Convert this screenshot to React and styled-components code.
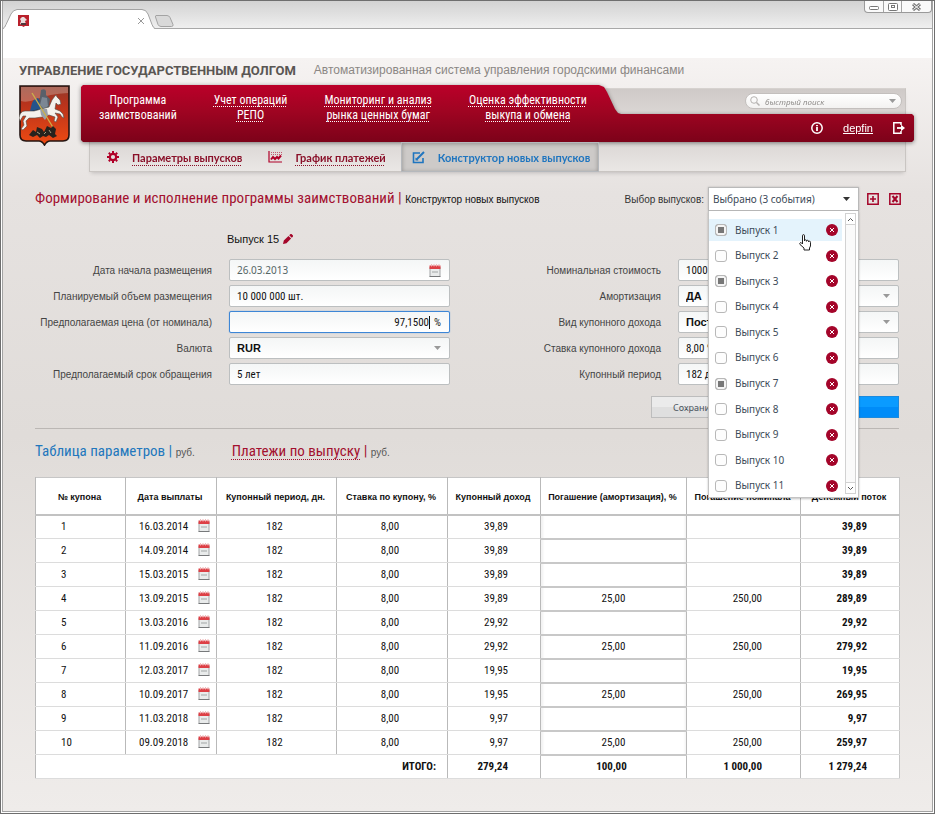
import React, { useState } from 'react';
import styled, { createGlobalStyle } from 'styled-components';

const narrow = `'Roboto Condensed', 'Liberation Sans', Arial, sans-serif`;
const arial = `'Liberation Sans', Arial, sans-serif`;
const humanist = `'Noto Sans', 'Open Sans', sans-serif`;

const GlobalStyle = createGlobalStyle`
  * {
    box-sizing: border-box;
  }

  body {
    background: #fff;
    color: #222;
    font-family: ${arial};
    font-size: 10px;
    line-height: 15px;
    margin: 0;
  }

  button,
  input,
  select {
    color: inherit;
    font: inherit;
    margin: 0;
  }

  button {
    background: none;
    border: 0;
    cursor: pointer;
    padding: 0;
  }

  svg {
    display: block;
    flex: none;
  }
`;

const Frame = styled.div`
  background: #fff;
  border: 1px solid #6e6e6e;
  display: flex;
  min-height: 100vh;
  padding: 0 1px 1px;
`;

const Window = styled.div`
  border: 1px solid #a3a3a3;
  border-top: 0;
  display: flex;
  flex: 1;
  flex-direction: column;
  min-width: 860px;
`;

const TabStrip = styled.div`
  align-items: flex-end;
  background: linear-gradient(#d2d2d2, #efefef);
  border-bottom: 1px solid #a8a8a8;
  display: flex;
  height: 28px;
`;

const Tab = styled.div`
  display: grid;
  height: 20px;
  margin-bottom: -1px;
  width: 152px;

  > * {
    grid-area: 1 / 1;
  }
`;

const TabContent = styled.div`
  align-items: center;
  display: flex;
  justify-content: space-between;
  padding: 3px 11px 0 15px;
`;

const NewTab = styled.button`
  align-self: flex-end;
  margin-bottom: 1px;
`;

const WindowButtons = styled.div`
  align-self: flex-start;
  background: #fafafa;
  border: 1px solid #9a9a9a;
  border-radius: 0 0 4px 4px;
  border-top: 0;
  display: flex;
  height: 12px;
  margin-left: auto;
`;

const WindowButton = styled.button`
  display: flex;
  align-items: center;
  justify-content: center;
  width: ${(props) => (props.$wide ? 30 : 18)}px;

  & + & {
    border-left: 1px solid #a5a5a5;
  }
`;

const AddressArea = styled.div`
  background: #fff;
  height: 29px;
`;

const Page = styled.div`
  background: linear-gradient(#f6f3f2, #e6e2e0 18%, #e0dcd9 50%, #efecea);
  flex: 1;
  padding: 0 18px 32px 16px;
`;

const TitleRow = styled.div`
  align-items: center;
  display: flex;
  gap: 18px;
  height: 24px;
  margin-bottom: 3px;
`;

const SystemName = styled.h1`
  color: #5a5653;
  font-family: Roboto, sans-serif;
  font-size: 13px;
  font-weight: 700;
  margin: 0;
`;

const SystemNote = styled.p`
  color: #8b8784;
  font-size: 12px;
  margin: 0;
`;

const Header = styled.header`
  align-items: flex-start;
  display: flex;
  gap: 11px;
`;

const HeaderMain = styled.div`
  display: grid;
  flex: 1;
  grid-template-rows: 57px 31px;
`;

const GreyPanel = styled.div`
  background: linear-gradient(#cfcac8, #dcd8d6 28px, #dcd8d6 55px, #eae7e5);
  border: 1px solid #c9c5c2;
  border-top-color: #d6d2cf;
  box-shadow: 0 3px 4px -2px rgba(0, 0, 0, 0.18);
  grid-area: 1 / 1 / 3 / 2;
  margin: 3px 8px 1px;
`;

const BarShadow = styled.div`
  display: grid;
  filter: drop-shadow(0 1px 2px rgba(0, 0, 0, 0.45));
  grid-area: 1 / 1;
`;

const RedBar = styled.div`
  background: linear-gradient(#bb0029, #a00422 45%, #7c0219);
  clip-path: polygon(
    0 2px, 2px 0, 518px 0, 523px 2px, 526px 7px, 534px 24px, 537px 28px, 540px 29px,
    calc(100% - 2px) 29px, 100% 31px, 100% calc(100% - 2px), calc(100% - 2px) 100%,
    2px 100%, 0 calc(100% - 2px)
  );
  display: flex;
  justify-content: space-between;
`;

const MainNav = styled.nav`
  display: flex;
  gap: 37px;
  padding: 8px 0 0 18px;
`;

const MainLink = styled.a`
  color: #fff;
  font-family: ${narrow};
  font-size: 12px;
  line-height: 15px;
  text-align: center;
  text-decoration: ${(props) => (props.$current ? 'none' : 'underline dotted 1px')};
  text-decoration-skip-ink: none;
  text-underline-offset: 2px;
  white-space: pre-line;
`;

const UserBar = styled.div`
  align-items: center;
  align-self: flex-end;
  color: #fff;
  display: flex;
  gap: 20px;
  height: 28px;
  padding-right: 9px;
`;

const UserLink = styled.a`
  color: #fff;
  font-size: 11px;
`;

const Search = styled.form`
  align-items: center;
  align-self: start;
  background: linear-gradient(#fff, #f3f2f1);
  border: 1px solid #c3bfbd;
  border-radius: 9px;
  display: flex;
  gap: 5px;
  grid-area: 1 / 1;
  height: 16px;
  justify-self: end;
  margin: 8px 12px 0 0;
  padding: 0 5px 0 4px;
  position: relative;
  width: 157px;

  input {
    background: none;
    border: 0;
    flex: 1;
    font-family: ${humanist};
    font-size: 8px;
    font-style: italic;
    height: 14px;
    min-width: 0;
    outline: 0;
    padding: 0;
  }

  input::placeholder {
    color: #8f8c8a;
    opacity: 1;
  }
`;

const SubNav = styled.nav`
  display: flex;
  grid-area: 2 / 1;
  margin: 0 8px 1px 9px;
  position: relative;
`;

const SubItem = styled.div`
  align-items: center;
  background: ${(props) => (props.$current ? '#cdcac8' : 'none')};
  border: 1px solid ${(props) => (props.$current ? '#b5b8bc' : 'transparent')};
  box-shadow: ${(props) => (props.$current ? 'inset 0 1px 4px rgba(0, 0, 0, 0.3)' : 'none')};
  color: ${(props) => (props.$current ? '#1f75bf' : '#b00028')};
  display: flex;
  gap: 13px;
  padding: 0 ${(props) => (props.$current ? 8 : 14)}px;
  padding-left: ${(props) => (props.$first ? 16 : 10)}px;
`;

const SubLink = styled.a`
  color: ${(props) => (props.$current ? '#1f75bf' : '#8a1029')};
  font-family: Lato, ${humanist};
  font-size: 11px;
  font-weight: 700;
  text-decoration: ${(props) => (props.$current ? 'none' : 'underline dotted 1px')};
  text-decoration-skip-ink: none;
  text-underline-offset: 3px;
`;

const Content = styled.main`
  padding: 0 15px 0 16px;
`;

const HeadingRow = styled.div`
  align-items: center;
  display: flex;
  height: 24px;
  justify-content: space-between;
  margin-top: 14px;
`;

const Heading = styled.h2`
  color: #a3102f;
  font-family: ${narrow};
  font-size: 15px;
  font-weight: 400;
  line-height: 20px;
  margin: 0;

  small {
    color: #111;
    font-family: ${arial};
    font-size: 10px;
  }
`;

const Picker = styled.div`
  align-items: center;
  display: flex;
  gap: 4px;
`;

const PickerLabel = styled.span`
  color: #333;
`;

const PickerBox = styled.div`
  position: relative;
  width: 151px;
`;

const PickerButton = styled.button`
  align-items: center;
  background: #fff;
  border: 1px solid #b9b9b9;
  box-shadow: 0 0 2px rgba(0, 0, 0, 0.2);
  color: #3c4a58;
  display: flex;
  font-family: ${humanist};
  font-size: 10px;
  height: 24px;
  justify-content: space-between;
  padding: 0 8px 0 4px;
  width: 100%;
`;

const PickerPanel = styled.div`
  background: #fff;
  border: 1px solid #c4c4c4;
  border-top: 0;
  box-shadow: 0 1px 2px rgba(0, 0, 0, 0.25);
  display: flex;
  gap: 3px;
  height: 287px;
  left: 0;
  padding-right: 2px;
  position: absolute;
  right: 0;
  top: 24px;
  z-index: 2;
`;

const OptionList = styled.ul`
  display: flex;
  flex: 1;
  flex-direction: column;
  justify-content: space-between;
  list-style: none;
  margin: 0;
  padding: 8px 0 0;
`;

const Option = styled.li`
  align-items: center;
  background: ${(props) => (props.$hover ? '#e4f3fc' : 'none')};
  display: flex;
  height: 22px;
  justify-content: space-between;
  padding: 0 4px 0 6px;
  position: relative;

  label {
    align-items: center;
    color: #3c4a58;
    display: flex;
    font-family: ${humanist};
    font-size: 10px;
    gap: 8px;
  }
`;

const Checkbox = styled.input.attrs({ type: 'checkbox' })`
  appearance: none;
  background: #fdfdfd;
  border: 1px solid #b8b8b8;
  border-radius: 3px;
  height: 12px;
  width: 12px;

  &:checked {
    background: #777;
    box-shadow: inset 0 0 0 2px #f4f4f4;
  }
`;

const HandCursor = styled.svg`
  left: 90px;
  position: absolute;
  top: 15px;
  z-index: 1;
`;

const ScrollTrack = styled.div`
  background: #fafafa;
  border: 1px solid #d2d2d2;
  display: flex;
  flex-direction: column;
  justify-content: space-between;
  margin: 2px 0 3px;
  width: 11px;

  button {
    align-items: center;
    background: #fff;
    display: flex;
    height: 11px;
    justify-content: center;
  }

  button:first-child {
    border-bottom: 1px solid #d2d2d2;
  }

  button:last-child {
    border-top: 1px solid #d2d2d2;
  }
`;

const PickerTools = styled.div`
  display: flex;
  gap: 10px;
  margin: 0 -2px 0 4px;
`;

const IssueTitle = styled.div`
  align-items: center;
  color: #111;
  display: flex;
  font-size: 11px;
  gap: 4px;
  height: 16px;
  margin: 20px 0 0 192px;
`;

const Form = styled.form`
  column-gap: 17px;
  display: grid;
  grid-template-columns: 177fr 221fr 194fr 221fr;
  margin-top: 12px;
  row-gap: 4px;
`;

const Label = styled.label`
  align-self: center;
  color: #444;
  text-align: right;
`;

const Field = styled.div`
  align-items: center;
  background: linear-gradient(#f4f6f6, #fff);
  border: 1px solid ${(props) => (props.$active ? '#3d86d6' : '#bcbfc0')};
  border-radius: 2px;
  box-shadow: ${(props) => (props.$active ? '0 0 1px #3d86d6' : 'none')};
  display: flex;
  font-family: ${narrow};
  font-size: 11px;
  height: 22px;
  min-width: 0;
  padding: 0 8px 0 7px;

  input,
  select {
    appearance: none;
    background: none;
    border: 0;
    color: ${(props) => (props.$muted ? '#566' : '#111')};
    flex: 1;
    font-family: ${(props) => (props.$muted ? humanist : props.$strong ? arial : narrow)};
    font-size: ${(props) => (props.$muted ? 10 : 11)}px;
    font-weight: ${(props) => (props.$strong ? 700 : 400)};
    min-width: 0;
    outline: 0;
    padding: 0;
    text-align: ${(props) => (props.$active ? 'right' : 'left')};
  }
`;

const Caret = styled.span`
  background: #111;
  height: 13px;
  margin-right: 4px;
  width: 1px;
`;

const Actions = styled.div`
  display: flex;
  gap: 10px;
  justify-content: flex-end;
  margin-top: 11px;
`;

const ActionButton = styled.button`
  background: ${(props) =>
    props.$primary
      ? 'linear-gradient(#0a9bff 50%, #008cf8 50%)'
      : 'linear-gradient(#ebebeb 50%, #dfdfdf 50%)'};
  border: 1px solid ${(props) => (props.$primary ? '#1b8ade' : '#bdbdbd')};
  color: #4c5661;
  font-family: ${humanist};
  font-size: 9px;
  height: 22px;
  padding-left: 21px;
  text-align: left;
  width: 119px;
`;

const Divider = styled.hr`
  border: 0;
  border-top: 1px solid #bbb7b4;
  margin: 10px 0 11px;
`;

const Tabs = styled.div`
  color: #a3102f;
  display: flex;
  font-family: ${narrow};
  font-size: 15px;
  gap: 37px;
  line-height: 22px;

  span:first-child {
    color: #2277bd;
  }

  a {
    color: inherit;
    text-decoration: underline dotted 1px;
    text-decoration-skip-ink: none;
    text-underline-offset: 3px;
  }

  small {
    color: #555;
    font-family: ${arial};
    font-size: 10px;
  }
`;

const Table = styled.table`
  background: #fff;
  border: 1px solid #c6c6c6;
  border-collapse: collapse;
  color: #111;
  font-family: ${narrow};
  font-size: 11px;
  margin-top: 13px;
  table-layout: fixed;
  width: 100%;

  th,
  td {
    border-bottom: 1px solid #dcdcdc;
    border-left: 1px solid #b9b9b9;
    height: 24px;
    padding: 0 4px 0 0;
    text-align: center;
  }

  thead th {
    border-bottom: 2px solid #c2c2c2;
    font-family: ${arial};
    font-size: 9px;
    height: 37px;
    padding: 4px 2px 0 0;
  }

  tfoot td {
    font-weight: 700;
  }
`;

const NumberCell = styled.td`
  && {
    padding-right: ${(props) => props.$pad}px;
    text-align: right;
  }
  font-weight: ${(props) => (props.$bold ? 700 : 400)};
`;

const IndexCell = styled.td`
  && {
    padding-left: 25px;
    text-align: left;
  }
`;

const EditCell = styled.td`
  && {
    border-bottom: 2px solid #c8c8c8;
    padding: 0;
  }
  background: linear-gradient(90deg, #f0f0f0, #fff 3px, #fff calc(100% - 3px), #f0f0f0);
`;

const DateWrap = styled.div`
  align-items: center;
  display: flex;
  justify-content: space-between;
  padding: 0 2px 0 13px;

  svg {
    margin-bottom: 3px;
  }
`;

const Emblem = () => (
  <svg width="51" height="61" viewBox="0 0 51 61" role="img" aria-label="Герб Москвы">
    <defs>
      <linearGradient id="shield" x1="0" y1="0" x2="0" y2="1">
        <stop offset="0" stopColor="#8e3a2c" />
        <stop offset="0.3" stopColor="#b8331c" />
        <stop offset="1" stopColor="#ee4a12" />
      </linearGradient>
    </defs>
    <path d="M1 1h49v49q0 6-6 6H31q-3 0-5.500 4q-2.500-4-5.500-4H7q-6 0-6-6z" fill="url(#shield)" stroke="#241512" strokeWidth="1.600" />
    <path d="M2 2h47v6Q30 9 18 14Q8 18 2 16z" fill="#d8b3a8" opacity="0.4" />
    <path d="M19 13q-6 1-7 9l-1 4 9 1 4-8z" fill="#24548c" />
    <path d="M12 26l8-2-1 4z" fill="#153459" />
    <path d="M22 5q4-2 5 1v4l4 4-1 8-2 7-6-2-2-7 1-8z" fill="#59606a" />
    <path d="M23 12l5 1 1 8-4 3-4-4z" fill="#7c8794" />
    <path
      d="M30 22l3-7 3-4 1-1 1 2 3 3 1 4-3 1-2-2-1 6 5 2 3 3 1 4-2-1-2-3-5-1 3 4-2 5-2-1 1-4-6-2-7 2-7 1-6 0-3 3 1 5-4 4-2-1 3-4-1-4 3-5-3 0-3 5-1-3q1-7 6-7l5 0 4 0z"
      fill="#f4f1ec"
      stroke="#514b47"
      strokeWidth="0.600"
    />
    <path d="M21 24l7 0 1 6-3 5-4-5z" fill="#9aa0a8" />
    <path d="M13 8l22 36" stroke="#cbb24a" strokeWidth="1.300" />
    <path d="M10 50l4-5 3 2 1-5 5 2 2 3 3-6 4 2 2-2 3 3-1 5 2 2-4 2-4-3-3 2-3-1-3 2-3-3-4 2z" fill="#26221d" />
    <path d="M18 47l3 2M30 45l2 3M25 49l2-2" stroke="#c8bd96" strokeWidth="0.800" />
  </svg>
);

const MiniEmblem = () => (
  <svg width="11" height="12" viewBox="0 0 11 12" aria-hidden="true">
    <path d="M0 0h11v11H7l-1.500 1L4 11H0z" fill="#b9202c" />
    <path d="M4 2h2l2 2 1 1-2 1 1 3-3 1-3-1 1-3-1-2z" fill="#e9dcdc" />
    <path d="M3 8h5v2H3z" fill="#51383c" />
  </svg>
);

const Calendar = () => (
  <svg width="12" height="13" viewBox="0 0 12 13" aria-hidden="true">
    <path d="M1 3h10v9.500H1z" fill="#e9ebeb" stroke="#a2a4a6" />
    <path d="M.5 12.500h11" stroke="#77797b" />
    <path d="M.5 1.500h11v3.500H.5z" fill="#dd3f45" />
    <path d="M2.500 0v2.500M5 0v2.500M7.500 0v2.500M10 0v2.500" stroke="#efb9ba" />
    <path d="M3 8h6" stroke="#b9bcbc" strokeWidth="1.500" />
  </svg>
);

const Arrow = ({ color = '#999' }) => (
  <svg width="7" height="4" viewBox="0 0 7 4" aria-hidden="true">
    <path d="M0 0h7L3.500 4z" fill={color} />
  </svg>
);

const Gear = () => (
  <svg width="12" height="12" viewBox="0 0 12 12" fill="none" stroke="currentColor" aria-hidden="true">
    <circle cx="6" cy="6" r="3.200" strokeWidth="2.200" />
    <path d="M6 0v2M6 10v2M0 6h2M10 6h2M1.800 1.800l1.400 1.400M8.800 8.800l1.400 1.400M10.200 1.800L8.800 3.200M3.200 8.800l-1.400 1.400" strokeWidth="2" />
  </svg>
);

const ChartIcon = () => (
  <svg width="14" height="12" viewBox="0 0 14 12" fill="none" stroke="currentColor" aria-hidden="true">
    <path d="M1 0v11h13" strokeWidth="1.200" />
    <path d="M3 1.500h11M3 3.500h11" strokeDasharray="1 1" opacity="0.6" />
    <path d="M3 8.500L5 6l2 2 2-2 1.500 1.500L13 4.500" strokeWidth="2" />
  </svg>
);

const EditIcon = () => (
  <svg width="13" height="13" viewBox="0 0 13 13" fill="none" stroke="currentColor" aria-hidden="true">
    <path d="M8 2H1.500v9.500H11V7" strokeWidth="1.600" />
    <path d="M4.500 8.500L12 1" strokeWidth="2" />
    <path d="M3.500 6.500v3h3z" fill="currentColor" stroke="none" />
  </svg>
);

const Pencil = () => (
  <svg width="10" height="10" viewBox="0 0 10 10" fill="#a5062a" aria-hidden="true">
    <path d="M0 10l.8-3.500L5.500 2l2.600 2.500-4.600 4.700zM6.200 1.300L7.500 0q.6-.2 1 0L10 1.500q.2.500 0 1L8.800 3.800z" />
  </svg>
);

const Cross = () => (
  <svg width="12" height="12" viewBox="0 0 12 12" aria-hidden="true">
    <circle cx="6" cy="6" r="6" fill="#a4052a" />
    <path d="M4 4l4 4M8 4L4 8" stroke="#fff" />
  </svg>
);

const mainLinks = [
  'Программа\nзаимствований',
  'Учет операций\nРЕПО',
  'Мониторинг и анализ\nрынка ценных бумаг',
  'Оценка эффективности\nвыкупа и обмена',
];

const columns = [
  ['№ купона', 90],
  ['Дата выплаты', 91],
  ['Купонный период, дн.', 120],
  ['Ставка по купону, %', 111],
  ['Купонный доход', 93],
  ['Погашение (амортизация), %', 146],
  ['Погашение номинала', 114],
  ['Денежный поток', 99],
];

const rows = [
  ['16.03.2014', '39,89', '', '', '39,89'],
  ['14.09.2014', '39,89', '', '', '39,89'],
  ['15.03.2015', '39,89', '', '', '39,89'],
  ['13.09.2015', '39,89', '25,00', '250,00', '289,89'],
  ['13.03.2016', '29,92', '', '', '29,92'],
  ['11.09.2016', '29,92', '25,00', '250,00', '279,92'],
  ['12.03.2017', '19,95', '', '', '19,95'],
  ['10.09.2017', '19,95', '25,00', '250,00', '269,95'],
  ['11.03.2018', '9,97', '', '', '9,97'],
  ['09.09.2018', '9,97', '25,00', '250,00', '259,97'],
];

const issues = Array.from({ length: 11 }, (_, i) => i + 1);

const IssuePicker = () => {
  const [selected, setSelected] = useState([1, 3, 7]);
  const toggle = (n) =>
    setSelected(selected.includes(n) ? selected.filter((x) => x !== n) : [...selected, n]);

  return (
    <Picker>
      <PickerLabel>Выбор выпусков:</PickerLabel>
      <PickerBox>
        <PickerButton type="button" aria-haspopup="true" aria-expanded="true">
          Выбрано ({selected.length} события)
          <Arrow color="#333" />
        </PickerButton>
        <PickerPanel>
          <OptionList>
            {issues.map((n) => (
              <Option key={n} $hover={n === 1}>
                <label>
                  <Checkbox checked={selected.includes(n)} onChange={() => toggle(n)} />
                  Выпуск {n}
                </label>
                <button type="button" aria-label={`Удалить выпуск ${n}`}>
                  <Cross />
                </button>
                {n === 1 && (
                  <HandCursor width="13" height="17" viewBox="0 0 13 17" aria-hidden="true">
                    <path
                      d="M3.500 10V1.800q0-1.200 1-1.200t1 1.200V7q0-1.200 1-1.200t1 1v.5q0-1 1-1t1 1v.7q0-.8 1-.8t1 1.200V12l-1 2v2H5v-2L1 10.500Q.3 9 1.500 8.500q1 0 2 1.500z"
                      fill="#fff"
                      stroke="#222"
                    />
                  </HandCursor>
                )}
              </Option>
            ))}
          </OptionList>
          <ScrollTrack>
            <button type="button" aria-label="Вверх">
              <svg width="5" height="3" viewBox="0 0 5 3" fill="none" stroke="#555">
                <path d="M0 3l2.500-2.500L5 3" />
              </svg>
            </button>
            <button type="button" aria-label="Вниз">
              <svg width="5" height="3" viewBox="0 0 5 3" fill="none" stroke="#555">
                <path d="M0 0l2.500 2.500L5 0" />
              </svg>
            </button>
          </ScrollTrack>
        </PickerPanel>
      </PickerBox>
      <PickerTools>
        <button type="button" aria-label="Добавить">
          <svg width="12" height="12" viewBox="0 0 12 12" fill="none" stroke="#a5062a">
            <path d="M.8.800h10.400v10.400H.8z" strokeWidth="1.500" />
            <path d="M6 3v6M3 6h6" strokeWidth="1.600" />
          </svg>
        </button>
        <button type="button" aria-label="Экспорт в Excel">
          <svg width="12" height="12" viewBox="0 0 12 12" fill="none" stroke="#a5062a">
            <path d="M.8.800h10.400v10.400H.8z" strokeWidth="1.500" />
            <path d="M3.500 3l5 6M8.500 3l-5 6" strokeWidth="2" />
          </svg>
        </button>
      </PickerTools>
    </Picker>
  );
};

const TextField = ({ id, label, value, children, ...look }) => (
  <>
    <Label htmlFor={id}>{label}</Label>
    <Field {...look}>
      <input id={id} defaultValue={value} />
      {children}
    </Field>
  </>
);

const SelectField = ({ id, label, value }) => (
  <>
    <Label htmlFor={id}>{label}</Label>
    <Field $strong>
      <select id={id}>
        <option>{value}</option>
      </select>
      <Arrow />
    </Field>
  </>
);

const App = () => {
  return (
    <Frame>
      <GlobalStyle />
      <Window>
        <TabStrip>
          <Tab>
            <svg width="152" height="20" viewBox="0 0 152 20" aria-hidden="true">
              <path d="M0 20q2-1 3-4l5-11q2-4 6-4h125q4 0 6 4l4 11q1 3 3 4z" fill="#fff" />
              <path d="M0 19.500q2-1 3-4l5-10.500q2-4 6-4.500h125q4 0 6 4.500l4 10.500q1 3 3 4" fill="none" stroke="#a3a3a3" />
            </svg>
            <TabContent>
              <MiniEmblem />
              <button type="button" aria-label="Закрыть вкладку">
                <svg width="6" height="6" viewBox="0 0 6 6" stroke="#999">
                  <path d="M0 0l6 6M6 0L0 6" />
                </svg>
              </button>
            </TabContent>
          </Tab>
          <NewTab type="button" aria-label="Новая вкладка">
            <svg width="19" height="12" viewBox="0 0 19 12" fill="#d9d9d9" stroke="#a3a3a3">
              <path d="M1 .5h11q2 0 3 2l3 7q.5 2-1.500 2H6q-2 0-3-2L.5 2Q.2.700 1 .5z" />
            </svg>
          </NewTab>
          <WindowButtons>
            <WindowButton type="button" aria-label="Свернуть">
              <svg width="10" height="9" viewBox="0 0 10 9" fill="#fff" stroke="#777">
                <rect x=".5" y="4.500" width="9" height="3" rx="1" />
              </svg>
            </WindowButton>
            <WindowButton type="button" aria-label="Развернуть">
              <svg width="10" height="8" viewBox="0 0 10 8" fill="#fff" stroke="#777">
                <rect x=".5" y=".5" width="9" height="7" rx="1" />
                <rect x="3.500" y="2.500" width="3" height="2" />
              </svg>
            </WindowButton>
            <WindowButton type="button" aria-label="Закрыть" $wide>
              <svg width="9" height="8" viewBox="0 0 9 8">
                <path d="M1 1l7 6M8 1L1 7" stroke="#777" strokeWidth="3" />
                <path d="M1.500 1.500l6 5M7.500 1.500l-6 5" stroke="#fff" />
              </svg>
            </WindowButton>
          </WindowButtons>
        </TabStrip>
        <AddressArea />
        <Page>
          <TitleRow>
            <SystemName>УПРАВЛЕНИЕ ГОСУДАРСТВЕННЫМ ДОЛГОМ</SystemName>
            <SystemNote>Автоматизированная система управления городскими финансами</SystemNote>
          </TitleRow>
          <Header>
            <Emblem />
            <HeaderMain>
              <GreyPanel />
              <BarShadow>
                <RedBar>
                  <MainNav>
                    {mainLinks.map((text, i) => (
                      <MainLink key={text} href="#" $current={i === 0}>
                        {text}
                      </MainLink>
                    ))}
                  </MainNav>
                  <UserBar>
                    <svg width="12" height="12" viewBox="0 0 12 12" fill="none" stroke="#fff" aria-hidden="true">
                      <circle cx="6" cy="6" r="5.200" strokeWidth="1.500" />
                      <path d="M6 5v4M6 3v1.300" strokeWidth="1.800" />
                    </svg>
                    <UserLink href="#">depfin</UserLink>
                    <svg width="12" height="12" viewBox="0 0 12 12" fill="none" stroke="#fff" aria-hidden="true">
                      <path d="M8 3V.8H.8v10.400H8V9" strokeWidth="1.500" />
                      <path d="M4 6h5" strokeWidth="1.800" />
                      <path d="M8 2.800L12 6 8 9.200z" fill="#fff" stroke="none" />
                    </svg>
                  </UserBar>
                </RedBar>
              </BarShadow>
              <Search>
                <svg width="10" height="10" viewBox="0 0 10 10" fill="none" stroke="#b5b2b0" aria-hidden="true">
                  <circle cx="4" cy="4" r="3.300" />
                  <path d="M6.500 6.500l3 3" strokeWidth="1.500" />
                </svg>
                <input aria-label="Поиск" placeholder="быстрый поиск" />
                <Arrow />
              </Search>
              <SubNav>
                <SubItem $first>
                  <Gear />
                  <SubLink href="#">Параметры выпусков</SubLink>
                </SubItem>
                <SubItem>
                  <ChartIcon />
                  <SubLink href="#">График платежей</SubLink>
                </SubItem>
                <SubItem $current>
                  <EditIcon />
                  <SubLink href="#" $current>
                    Конструктор новых выпусков
                  </SubLink>
                </SubItem>
              </SubNav>
            </HeaderMain>
          </Header>
          <Content>
            <HeadingRow>
              <Heading>
                Формирование и исполнение программы заимствований |{' '}
                <small>Конструктор новых выпусков</small>
              </Heading>
              <IssuePicker />
            </HeadingRow>
            <IssueTitle>
              Выпуск 15 <Pencil />
            </IssueTitle>
            <Form>
              <TextField id="start" label="Дата начала размещения" value="26.03.2013" $muted>
                <Calendar />
              </TextField>
              <TextField id="nominal" label="Номинальная стоимость" value="1000.00" />
              <TextField id="volume" label="Планируемый объем размещения" value="10 000 000 шт." />
              <SelectField id="amort" label="Амортизация" value="ДА" />
              <TextField id="price" label="Предполагаемая цена (от номинала)" value="97,1500" $active>
                <Caret />%
              </TextField>
              <SelectField id="kind" label="Вид купонного дохода" value="Постоянный" />
              <SelectField id="currency" label="Валюта" value="RUR" />
              <TextField id="rate" label="Ставка купонного дохода" value="8,00 %" />
              <TextField id="term" label="Предполагаемый срок обращения" value="5 лет" />
              <TextField id="period" label="Купонный период" value="182 дн." />
            </Form>
            <Actions>
              <ActionButton type="button">Сохранить</ActionButton>
              <ActionButton type="button" aria-label="Рассчитать" $primary />
            </Actions>
            <Divider />
            <Tabs>
              <span>
                Таблица параметров | <small>руб.</small>
              </span>
              <span>
                <a href="#">Платежи по выпуску</a> | <small>руб.</small>
              </span>
            </Tabs>
            <Table>
              <colgroup>
                {columns.map(([name, width]) => (
                  <col key={name} width={width} />
                ))}
              </colgroup>
              <thead>
                <tr>
                  {columns.map(([name]) => (
                    <th key={name}>{name}</th>
                  ))}
                </tr>
              </thead>
              <tbody>
                {rows.map(([date, income, amort, nominal, flow], i) => (
                  <tr key={date}>
                    <IndexCell>{i + 1}</IndexCell>
                    <td>
                      <DateWrap>
                        {date} <Calendar />
                      </DateWrap>
                    </td>
                    <td>182</td>
                    <td>8,00</td>
                    <NumberCell $pad={32}>{income}</NumberCell>
                    <EditCell>{amort}</EditCell>
                    <NumberCell $pad={38}>{nominal}</NumberCell>
                    <NumberCell $pad={32} $bold>
                      {flow}
                    </NumberCell>
                  </tr>
                ))}
              </tbody>
              <tfoot>
                <tr>
                  <NumberCell colSpan={4} $pad={11} $bold>
                    ИТОГО:
                  </NumberCell>
                  <NumberCell $pad={32} $bold>
                    279,24
                  </NumberCell>
                  <td>100,00</td>
                  <NumberCell $pad={38} $bold>
                    1 000,00
                  </NumberCell>
                  <NumberCell $pad={32} $bold>
                    1 279,24
                  </NumberCell>
                </tr>
              </tfoot>
            </Table>
          </Content>
        </Page>
      </Window>
    </Frame>
  );
};

export default App;
